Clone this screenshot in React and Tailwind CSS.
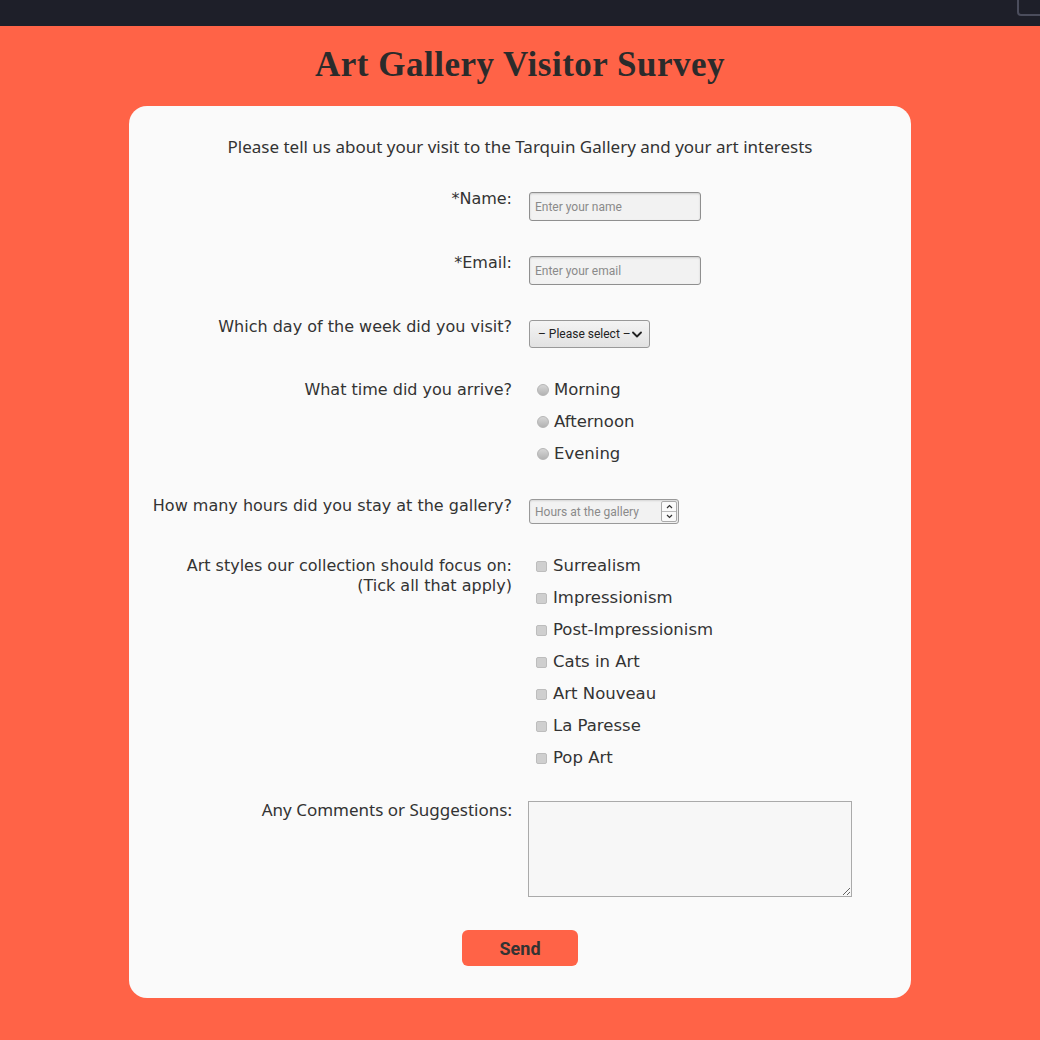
import React from "react";

const labelFont = { fontFamily: '"DejaVu Sans", sans-serif' };

function Row({ label, children, labelClass = "text-[16px]" }) {
  return (
    <div className="flex items-start">
      <div className={"w-1/2 pr-[8px] text-right leading-5 text-[#333] " + labelClass}>
        {label}
      </div>
      <div className="w-1/2 pl-[9px]">{children}</div>
    </div>
  );
}

function Radio({ label }) {
  return (
    <div className="flex items-center h-5">
      <span className="ml-[8px] mr-[5px] w-[12px] h-[12px] rounded-full border border-[#b5b5b5] bg-gradient-to-b from-[#d6d6d6] to-[#b3b3b3]" />
      <span className="text-[16.5px] text-[#333]">{label}</span>
    </div>
  );
}

function Check({ label }) {
  return (
    <div className="flex items-center h-5">
      <span className="ml-[7px] mr-[6px] w-[11px] h-[11px] rounded-[2px] border border-[#bdbdbd] bg-[#cfcfcf]" />
      <span className="text-[16.5px] text-[#333]">{label}</span>
    </div>
  );
}

export default function App() {
  return (
    <div className="min-h-[1040px] bg-[#ff6347] relative" style={labelFont}>
      <div className="h-[26px] bg-[#1e1f29] relative overflow-hidden">
        <div className="absolute left-[1017px] top-[-10px] w-[40px] h-[26px] rounded-[4px] border-2 border-[#4b4d5c]" />
      </div>
      <h1
        className="text-center text-[35px] font-bold leading-10 text-[#2b2b2b] mt-[19px] mb-[21px] tracking-[0.5px]"
        style={{ fontFamily: '"Liberation Serif", serif' }}
      >
        Art Gallery Visitor Survey
      </h1>
      <div className="mx-auto w-[782px] bg-[#fafafa] rounded-[18px] pt-[31px] pb-[32px]">
        <p
          className="text-center text-[17px] leading-5 text-[#333]"
          style={{ fontFamily: '"Noto Sans", sans-serif' }}
        >
          Please tell us about your visit to the Tarquin Gallery and your art interests
        </p>
        <div className="flex flex-col gap-[32px] mt-[32px]">
          <Row label="*Name:">
            <input
              placeholder="Enter your name"
              className="mt-[3px] w-[172px] h-[29px] px-[5px] rounded-[3px] border border-[#8f8f8f] bg-[#f2f2f2] shadow-[inset_0_1px_2px_rgba(0,0,0,0.15)] text-[12px] placeholder:text-[#8a8a8a] outline-none"
              style={{ fontFamily: "Roboto, sans-serif" }}
            />
          </Row>
          <Row label="*Email:">
            <input
              placeholder="Enter your email"
              className="mt-[3px] w-[172px] h-[29px] px-[5px] rounded-[3px] border border-[#8f8f8f] bg-[#f2f2f2] shadow-[inset_0_1px_2px_rgba(0,0,0,0.15)] text-[12px] placeholder:text-[#8a8a8a] outline-none"
              style={{ fontFamily: "Roboto, sans-serif" }}
            />
          </Row>
          <Row label="Which day of the week did you visit?">
            <div
              className="mt-[3px] w-[121px] h-[28px] rounded-[3px] border border-[#999] bg-gradient-to-b from-[#f4f4f4] to-[#e2e2e2] flex items-center justify-between pl-[8px] pr-[7px] text-[12px] text-[#222]"
              style={{ fontFamily: "Roboto, sans-serif" }}
            >
              <span>– Please select –</span>
              <svg width="10" height="7" viewBox="0 0 10 7" fill="none">
                <path d="M1 1.5l4 4 4-4" stroke="#222" strokeWidth="1.8" strokeLinecap="round" strokeLinejoin="round" />
              </svg>
            </div>
          </Row>
          <Row label="What time did you arrive?">
            <div className="flex flex-col gap-3">
              <Radio label="Morning" />
              <Radio label="Afternoon" />
              <Radio label="Evening" />
            </div>
          </Row>
          <Row label="How many hours did you stay at the gallery?">
            <div
              className="mt-[3px] w-[150px] h-[25px] rounded-[3px] border border-[#999] bg-[#f2f2f2] shadow-[inset_0_1px_2px_rgba(0,0,0,0.12)] flex items-center justify-between pl-[5px] pr-[1px] text-[12px] text-[#8a8a8a]"
              style={{ fontFamily: "Roboto, sans-serif" }}
            >
              <span>Hours at the gallery</span>
              <div className="flex flex-col w-[16px] h-[21px] border border-[#aaa] rounded-[2px] bg-[#fafafa]">
                <div className="flex-1 flex items-center justify-center border-b border-[#bbb]">
                  <svg width="7" height="5" viewBox="0 0 7 5"><path d="M1 4l2.5-2.5L6 4" stroke="#333" strokeWidth="1.2" fill="none" /></svg>
                </div>
                <div className="flex-1 flex items-center justify-center">
                  <svg width="7" height="5" viewBox="0 0 7 5"><path d="M1 1l2.5 2.5L6 1" stroke="#333" strokeWidth="1.2" fill="none" /></svg>
                </div>
              </div>
            </div>
          </Row>
          <Row
            label={
              <>
                Art styles our collection should focus on:
                <br />
                (Tick all that apply)
              </>
            }
          >
            <div className="flex flex-col gap-3">
              <Check label="Surrealism" />
              <Check label="Impressionism" />
              <Check label="Post-Impressionism" />
              <Check label="Cats in Art" />
              <Check label="Art Nouveau" />
              <Check label="La Paresse" />
              <Check label="Pop Art" />
            </div>
          </Row>
          <Row label="Any Comments or Suggestions:" labelClass="[font-family:'Noto_Sans',sans-serif] text-[17px]">
            <textarea className="block -ml-[1px] mt-[1px] w-[324px] h-[96px] border border-[#aaa] bg-[#f7f7f7] outline-none" />
          </Row>
        </div>
        <div className="flex justify-center mt-[33px]">
          <button
            className="w-[116px] h-[36px] rounded-[6px] bg-[#ff6347] text-[18px] font-bold text-[#333]"
            style={{ fontFamily: "Roboto, sans-serif" }}
          >
            Send
          </button>
        </div>
      </div>
    </div>
  );
}
